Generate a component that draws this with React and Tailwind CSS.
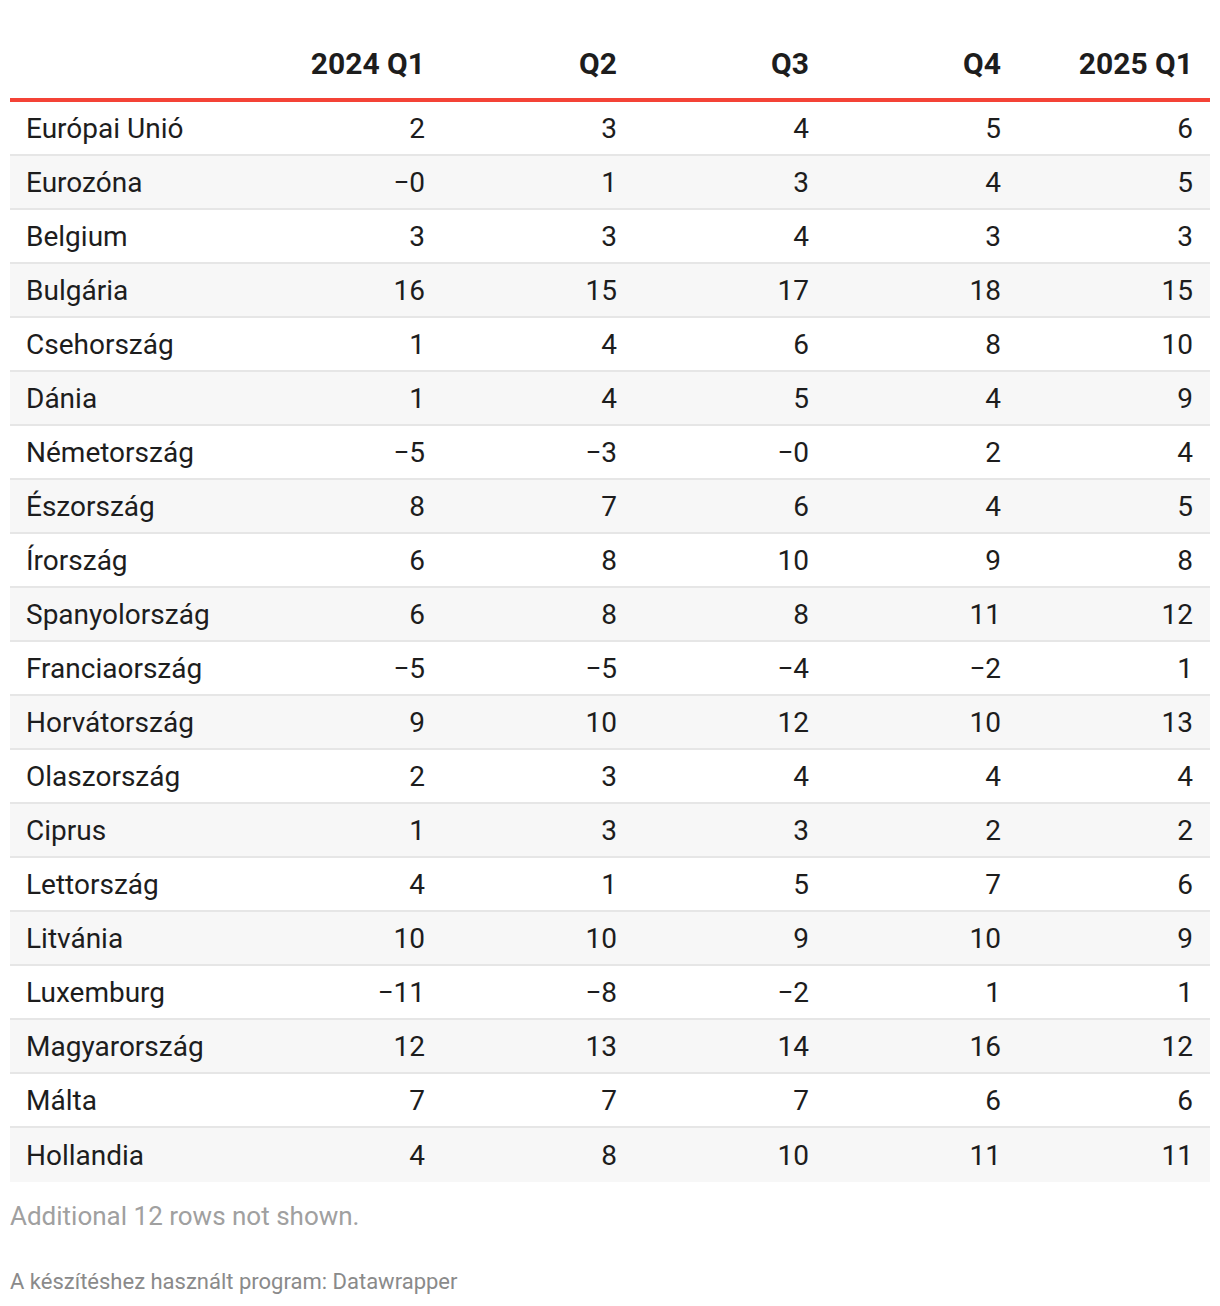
const rows = [
  ['Európai Unió', '2', '3', '4', '5', '6'],
  ['Eurozóna', '−0', '1', '3', '4', '5'],
  ['Belgium', '3', '3', '4', '3', '3'],
  ['Bulgária', '16', '15', '17', '18', '15'],
  ['Csehország', '1', '4', '6', '8', '10'],
  ['Dánia', '1', '4', '5', '4', '9'],
  ['Németország', '−5', '−3', '−0', '2', '4'],
  ['Észország', '8', '7', '6', '4', '5'],
  ['Írország', '6', '8', '10', '9', '8'],
  ['Spanyolország', '6', '8', '8', '11', '12'],
  ['Franciaország', '−5', '−5', '−4', '−2', '1'],
  ['Horvátország', '9', '10', '12', '10', '13'],
  ['Olaszország', '2', '3', '4', '4', '4'],
  ['Ciprus', '1', '3', '3', '2', '2'],
  ['Lettország', '4', '1', '5', '7', '6'],
  ['Litvánia', '10', '10', '9', '10', '9'],
  ['Luxemburg', '−11', '−8', '−2', '1', '1'],
  ['Magyarország', '12', '13', '14', '16', '12'],
  ['Málta', '7', '7', '7', '6', '6'],
  ['Hollandia', '4', '8', '10', '11', '11'],
]

const headers = ['2024 Q1', 'Q2', 'Q3', 'Q4', '2025 Q1']

export default function App() {
  return (
    <div className="bg-white w-[1220px] px-[10px] text-[#1d1d1d]" style={{ fontFamily: 'Roboto, "Liberation Sans", sans-serif' }}>
      {/* header */}
      <div className="grid grid-cols-[240px_repeat(5,192px)] pt-[46px] pb-[17px] border-b-4 border-[#f44336]">
        <div />
        {headers.map((h) => (
          <div key={h} className="text-right pr-[17px] text-[30px] leading-[35px] font-bold">{h}</div>
        ))}
      </div>

      {/* body */}
      <div>
        {rows.map((r, i) => (
          <div key={r[0]}
            className={`grid grid-cols-[240px_repeat(5,192px)] h-[54px] items-center text-[28px] pt-[1px] ${i % 2 === 1 ? 'bg-[#f7f7f7]' : 'bg-white'} ${i < rows.length - 1 ? 'border-b-2 border-[#e6e6e6]' : ''}`}>
            <div className="pl-[16px] whitespace-nowrap">{r[0]}</div>
            {r.slice(1).map((v, j) => (
              <div key={j} className="text-right pr-[17px]">{v}</div>
            ))}
          </div>
        ))}
      </div>

      <p className="text-[26px] text-[#a0a0a0] mt-[18px] leading-[32px]">Additional 12 rows not shown.</p>
      <p className="text-[22px] text-[#8a8a8a] mt-[36px] pb-[10px] leading-[28px]">A készítéshez használt program: Datawrapper</p>
    </div>
  )
}
